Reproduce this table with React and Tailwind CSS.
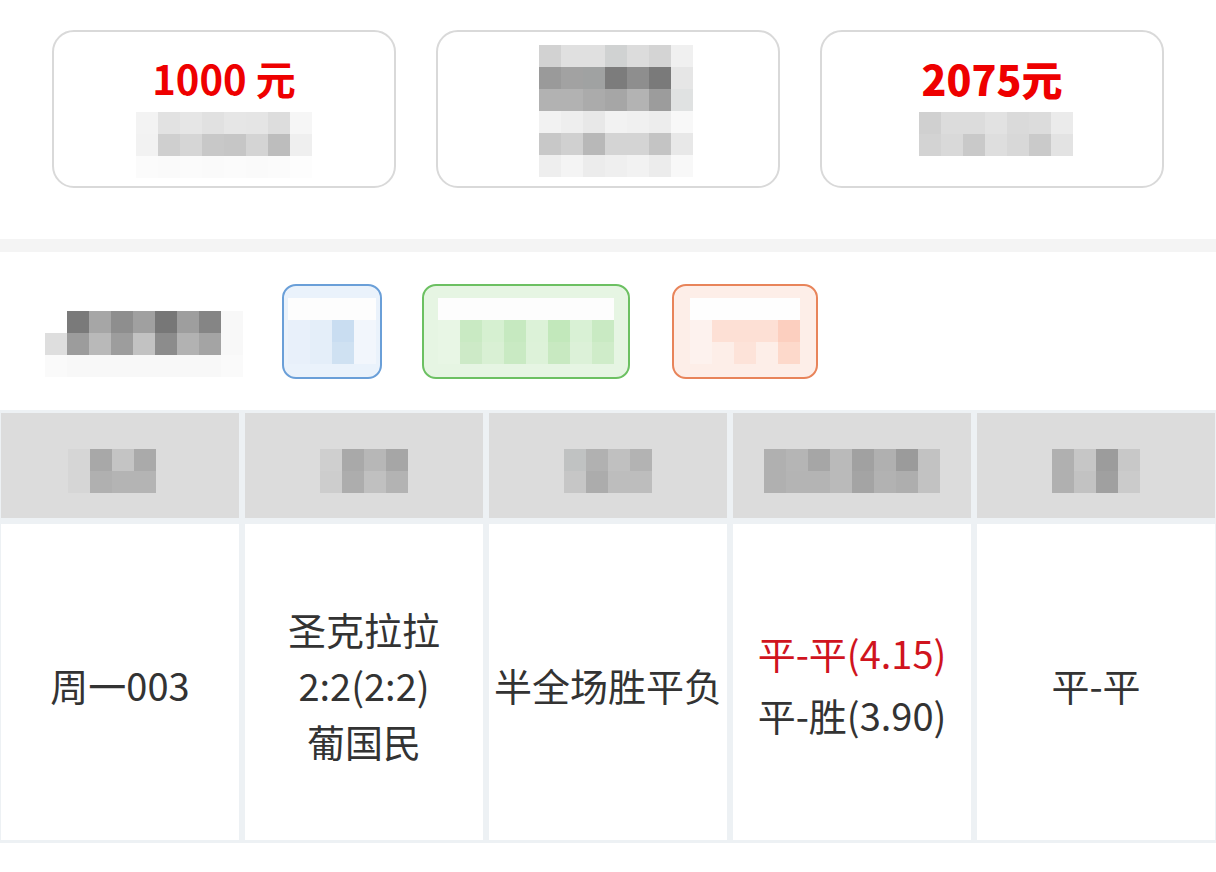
const Mosaic = ({ rows, size = 'w-[22px] h-[22px]' }) => (
    <div className="flex flex-col">
        {rows.map((row, i) => (
            <div key={i} className="flex">
                {row.map((c, j) => (
                    <div key={j} className={`${size} ${c}`}></div>
                ))}
            </div>
        ))}
    </div>
);

const card1 = [
    ['bg-[#f3f3f3]', 'bg-[#e2e2e2]', 'bg-[#e6e6e6]', 'bg-[#e1e1e1]', 'bg-[#e6e6e6]', 'bg-[#e5e5e5]', 'bg-[#dddddd]', 'bg-[#f6f6f6]'],
    ['bg-[#f2f2f2]', 'bg-[#cfcfcf]', 'bg-[#d6d6d6]', 'bg-[#c8c8c8]', 'bg-[#c6c6c6]', 'bg-[#d4d4d4]', 'bg-[#bdbdbd]', 'bg-[#efefef]'],
    ['bg-[#fbfbfb]', 'bg-[#fafafa]', 'bg-[#fbfbfb]', 'bg-[#fafafa]', 'bg-[#fbfbfb]', 'bg-[#fafafa]', 'bg-[#fbfbfb]', 'bg-[#fdfdfd]'],
];

const card2 = [
    ['bg-[#d2d2d2]', 'bg-[#e0e0e0]', 'bg-[#e0e0e0]', 'bg-[#d0d2d2]', 'bg-[#dcdcdc]', 'bg-[#d4d4d4]', 'bg-[#f0f0f0]'],
    ['bg-[#9a9a9a]', 'bg-[#a2a2a2]', 'bg-[#a0a2a2]', 'bg-[#7c7c7c]', 'bg-[#8e8e8e]', 'bg-[#7a7a7a]', 'bg-[#e6e6e6]'],
    ['bg-[#b2b2b2]', 'bg-[#b2b2b2]', 'bg-[#ababab]', 'bg-[#a6a6a6]', 'bg-[#b3b3b3]', 'bg-[#9c9c9c]', 'bg-[#e0e2e2]'],
    ['bg-[#f2f2f2]', 'bg-[#eeeeee]', 'bg-[#e8e8e8]', 'bg-[#f2f2f2]', 'bg-[#f0f0f0]', 'bg-[#ededed]', 'bg-[#f8f8f8]'],
    ['bg-[#c8c8c8]', 'bg-[#d0d0d0]', 'bg-[#b8b8b8]', 'bg-[#d4d4d4]', 'bg-[#d4d4d4]', 'bg-[#c4c4c4]', 'bg-[#e8e8e8]'],
    ['bg-[#eeeeee]', 'bg-[#f4f4f4]', 'bg-[#ececec]', 'bg-[#efefef]', 'bg-[#f2f2f2]', 'bg-[#ececec]', 'bg-[#f8f8f8]'],
];

const card3 = [
    ['bg-[#d0d0d0]', 'bg-[#dcdcdc]', 'bg-[#dcdcdc]', 'bg-[#e2e2e2]', 'bg-[#dadada]', 'bg-[#dcdcdc]', 'bg-[#ebebeb]'],
    ['bg-[#d3d3d3]', 'bg-[#d9d9d9]', 'bg-[#c9c9c9]', 'bg-[#dedede]', 'bg-[#d8d8d8]', 'bg-[#cacaca]', 'bg-[#e3e3e3]'],
];

const label = [
    ['bg-white', 'bg-[#7a7a7a]', 'bg-[#a6a6a6]', 'bg-[#8e8e8e]', 'bg-[#a0a0a0]', 'bg-[#777777]', 'bg-[#9e9e9e]', 'bg-[#858585]', 'bg-[#f8f8f8]'],
    ['bg-[#dedede]', 'bg-[#9c9c9c]', 'bg-[#b9b9b9]', 'bg-[#9d9d9d]', 'bg-[#c2c2c2]', 'bg-[#8c8c8c]', 'bg-[#b2b2b2]', 'bg-[#a4a4a4]', 'bg-[#f8f8f8]'],
    ['bg-[#fafafa]', 'bg-[#f8f8f8]', 'bg-[#f8f8f8]', 'bg-[#f8f8f8]', 'bg-[#f8f8f8]', 'bg-[#f8f8f8]', 'bg-[#f8f8f8]', 'bg-[#f8f8f8]', 'bg-[#fafafa]'],
];

const chipBlue = [
    ['bg-[#fdfdfd]', 'bg-[#fdfdfd]', 'bg-[#fdfdfd]', 'bg-[#fdfdfd]'],
    ['bg-[#e8f0fa]', 'bg-[#e4eef9]', 'bg-[#c9ddf1]', 'bg-[#f2f6fc]'],
    ['bg-[#e8f0fa]', 'bg-[#e4eef9]', 'bg-[#cfe1f2]', 'bg-[#f2f6fc]'],
];

const chipGreen = [
    ['bg-[#fdfdfd]', 'bg-[#fdfdfd]', 'bg-[#fdfdfd]', 'bg-[#fdfdfd]', 'bg-[#fdfdfd]', 'bg-[#fdfdfd]', 'bg-[#fdfdfd]', 'bg-[#fdfdfd]'],
    ['bg-[#e8f6e5]', 'bg-[#c9eac3]', 'bg-[#d6f0d1]', 'bg-[#c6e9c0]', 'bg-[#dcf2d8]', 'bg-[#c2e8bb]', 'bg-[#d9f1d5]', 'bg-[#c9eac3]'],
    ['bg-[#e8f6e5]', 'bg-[#cdeac7]', 'bg-[#d9f0d4]', 'bg-[#c9eac3]', 'bg-[#ddf2d9]', 'bg-[#c8e9c1]', 'bg-[#dcf1d8]', 'bg-[#cfecc9]'],
];

const chipOrange = [
    ['bg-[#fefefe]', 'bg-[#fefefe]', 'bg-[#fefefe]', 'bg-[#fefefe]', 'bg-[#fefefe]'],
    ['bg-[#fdf2ee]', 'bg-[#fde0d5]', 'bg-[#fde0d5]', 'bg-[#fde0d5]', 'bg-[#fccfbf]'],
    ['bg-[#fdf2ee]', 'bg-[#fdeee8]', 'bg-[#fde3d9]', 'bg-[#fdeee8]', 'bg-[#fdd9cb]'],
];

const heads = [
    [
        ['bg-[#d6d6d6]', 'bg-[#a8a8a8]', 'bg-[#c4c4c4]', 'bg-[#aaaaaa]'],
        ['bg-[#d6d6d6]', 'bg-[#b0b0b0]', 'bg-[#b4b4b4]', 'bg-[#b4b4b4]'],
    ],
    [
        ['bg-[#cfcfcf]', 'bg-[#a9a9a9]', 'bg-[#b7b7b7]', 'bg-[#a6a6a6]'],
        ['bg-[#cdcdcd]', 'bg-[#adadad]', 'bg-[#c0c0c0]', 'bg-[#b3b3b3]'],
    ],
    [
        ['bg-[#c0c2c2]', 'bg-[#b1b1b1]', 'bg-[#c0c0c0]', 'bg-[#b3b3b3]'],
        ['bg-[#c6c6c6]', 'bg-[#acacac]', 'bg-[#bdbdbd]', 'bg-[#bdbdbd]'],
    ],
    [
        ['bg-[#b0b0b0]', 'bg-[#b5b5b5]', 'bg-[#a6a6a6]', 'bg-[#bababa]', 'bg-[#a1a1a1]', 'bg-[#b0b0b0]', 'bg-[#9b9b9b]', 'bg-[#c2c2c2]'],
        ['bg-[#b0b0b0]', 'bg-[#b4b4b4]', 'bg-[#b4b4b4]', 'bg-[#bababa]', 'bg-[#a4a4a4]', 'bg-[#b2b2b2]', 'bg-[#aeaeae]', 'bg-[#c2c2c2]'],
    ],
    [
        ['bg-[#b0b0b0]', 'bg-[#c6c6c6]', 'bg-[#9c9c9c]', 'bg-[#c8c8c8]'],
        ['bg-[#b0b0b0]', 'bg-[#c2c2c2]', 'bg-[#a0a0a0]', 'bg-[#cbcbcb]'],
    ],
];

const Card = ({ children }) => (
    <div className="h-[158px] rounded-[22px] border-2 border-[#d9d9d9] bg-white flex flex-col items-center">
        {children}
    </div>
);

export default function App() {
    return (
        <div className="w-[1216px] min-h-[872px] bg-white text-[#333333] font-['Noto_Sans_CJK_SC','Noto_Sans',sans-serif]">
            {/* 顶部统计 */}
            <div className="grid grid-cols-3 gap-[40px] px-[52px] pt-[30px]">
                <Card>
                    <div className="mt-[22px] text-[40px] leading-[48px] font-bold text-[#ee0000]">1000 元</div>
                    <div className="mt-[10px]">
                        <Mosaic rows={card1} />
                    </div>
                </Card>
                <Card>
                    <div className="mt-[13px] ml-[16px]">
                        <Mosaic rows={card2} />
                    </div>
                </Card>
                <Card>
                    <div className="mt-[22px] text-[41px] leading-[48px] font-black text-[#ee0000]">2075元</div>
                    <div className="mt-[10px] ml-[8px]">
                        <Mosaic rows={card3} />
                    </div>
                </Card>
            </div>

            <div className="mt-[51px] h-[13px] bg-[#f4f4f4]"></div>

            {/* 筛选 */}
            <div className="h-[158px] flex items-center pl-[45px]">
                <div className="mt-[25px]">
                    <Mosaic rows={label} />
                </div>
                <div className="ml-[39px] w-[100px] h-[95px] rounded-[14px] border-2 border-[#6a9fd8] bg-[#eaf2fb] overflow-hidden flex items-center justify-center">
                    <Mosaic rows={chipBlue} />
                </div>
                <div className="ml-[40px] w-[208px] h-[95px] rounded-[14px] border-2 border-[#6cc062] bg-[#e6f5e3] overflow-hidden flex items-center justify-center">
                    <Mosaic rows={chipGreen} />
                </div>
                <div className="ml-[42px] w-[146px] h-[95px] rounded-[14px] border-2 border-[#e8845a] bg-[#fdeee8] overflow-hidden flex items-center justify-center">
                    <Mosaic rows={chipOrange} />
                </div>
            </div>

            {/* 表格 */}
            <div className="bg-[#edf1f4] px-[1px] pt-[3px] pb-[3px] flex flex-col gap-[6px]">
                <div className="grid grid-cols-5 gap-[6px]">
                    {heads.map((h, i) => (
                        <div key={i} className="h-[105px] bg-[#dcdcdc] flex items-center justify-center">
                            <div className={i === 0 ? 'mt-[10px] mr-[16px]' : 'mt-[10px]'}>
                                <Mosaic rows={h} />
                            </div>
                        </div>
                    ))}
                </div>
                <div className="grid grid-cols-5 gap-[6px] text-[38px]">
                    <div className="h-[316px] bg-white flex items-center justify-center leading-[56px] pt-[6px]">周一003</div>
                    <div className="h-[316px] bg-white flex flex-col items-center justify-center leading-[56px] pt-[6px]">
                        <div>圣克拉拉</div>
                        <div>2:2(2:2)</div>
                        <div>葡国民</div>
                    </div>
                    <div className="h-[316px] bg-white flex items-center justify-center leading-[56px] whitespace-nowrap pt-[6px]">半全场胜平负</div>
                    <div className="h-[316px] bg-white flex flex-col items-center justify-center leading-[62px] whitespace-nowrap pt-[4px]">
                        <div className="text-[#d0141e]">平-平(4.15)</div>
                        <div>平-胜(3.90)</div>
                    </div>
                    <div className="h-[316px] bg-white flex items-center justify-center leading-[56px] pt-[6px]">平-平</div>
                </div>
            </div>
        </div>
    );
}
